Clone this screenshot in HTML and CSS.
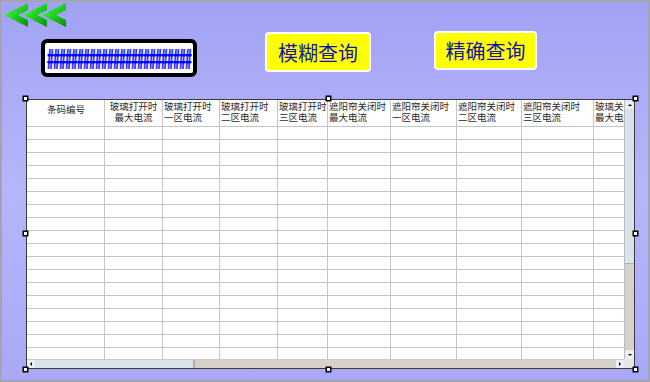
FILE: index.html
```html
<!DOCTYPE html>
<html lang="zh">
<head>
    <meta charset="UTF-8">
    <title>查询</title>
    <link rel="stylesheet" href="styles.css">
</head>
<body>
    <div id="screen">
        <div id="header">
            <svg class="back" width="70" height="26" viewBox="0 0 70 26">
                <defs>
                    <linearGradient id="g" x1="0" y1="0" x2="1" y2="1">
                        <stop offset="0" stop-color="#5cff5c"/>
                        <stop offset="0.5" stop-color="#1fd21f"/>
                        <stop offset="1" stop-color="#0a8a0a"/>
                    </linearGradient>
                </defs>
                <polygon fill="url(#g)" points="1,12 25,0 25,7 15,12 25,17 25,24"/>
                <polygon fill="url(#g)" points="20,12 44,0 44,7 34,12 44,17 44,24"/>
                <polygon fill="url(#g)" points="39,12 63,0 63,7 53,12 63,17 63,24"/>
            </svg>
            <div id="controls">
                <div id="barcode"><span>########################</span></div>
                <div class="query-btn" id="fuzzy">模糊查询</div>
                <div class="query-btn" id="exact">精确查询</div>
            </div>
        </div>

        <div id="grid-box">
            <div id="viewport">
                <div class="row head">
                    <div class="cell single">条码编号</div>
                    <div class="cell center">玻璃打开时<br>最大电流</div>
                    <div class="cell">玻璃打开时<br>一区电流</div>
                    <div class="cell">玻璃打开时<br>二区电流</div>
                    <div class="cell">玻璃打开时<br>三区电流</div>
                    <div class="cell">遮阳帘关闭时<br>最大电流</div>
                    <div class="cell">遮阳帘关闭时<br>一区电流</div>
                    <div class="cell">遮阳帘关闭时<br>二区电流</div>
                    <div class="cell">遮阳帘关闭时<br>三区电流</div>
                    <div class="cell">玻璃关闭时<br>最大电流</div>
                </div>
                <div id="rows"></div>
            </div>
            <div id="vscroll">
                <div class="sb-btn"><i class="tri up"></i></div>
                <div class="v-thumb"></div>
                <div class="track"></div>
                <div class="sb-btn"><i class="tri down"></i></div>
            </div>
            <div id="hscroll">
                <div class="sb-btn left-btn"><i class="tri left"></i></div>
                <div class="h-thumb"></div>
                <div class="track"></div>
                <div class="sb-btn right-btn"><i class="tri right"></i></div>
            </div>
            <div id="corner"></div>

            <span class="handle tl"></span>
            <span class="handle tm"></span>
            <span class="handle tr"></span>
            <span class="handle ml"></span>
            <span class="handle mr"></span>
            <span class="handle bl"></span>
            <span class="handle bm"></span>
            <span class="handle br"></span>
        </div>
    </div>

    <script>
        let rows = document.getElementById('rows');
        for (let i = 0; i < 19; i++) {
            let row = document.createElement('div');
            row.className = 'row';
            for (let j = 0; j < 10; j++) {
                let cell = document.createElement('div');
                cell.className = 'cell';
                row.appendChild(cell);
            }
            rows.appendChild(row);
        }
    </script>
</body>
</html>
```

FILE: styles.css
```css
body {
    margin: 0;
    font-family: "Noto Sans CJK SC", sans-serif;
}

#screen {
    width: 650px;
    height: 382px;
    box-sizing: border-box;
    overflow: hidden;
    background: linear-gradient(180deg, #a2a2f4 0%, #b6b6fc 50%, #a8a8f8 100%);
    box-shadow: inset 0 0 0 2px #a4a4b0;
}

#header {
    height: 96px;
}

.back {
    display: block;
    margin: 3px 0 0 3px;
}

#controls {
    display: flex;
    align-items: flex-start;
}

#barcode {
    width: 156px;
    height: 38px;
    margin: 10px 0 0 41px;
    box-sizing: border-box;
    border: 4px solid #000;
    border-radius: 6px;
    background-color: #fff;
    display: flex;
    align-items: center;
    justify-content: center;
    overflow: hidden;
}

#barcode span {
    font-family: "Liberation Sans", sans-serif;
    font-size: 10.8px;
    font-weight: bold;
    color: #0000ff;
    line-height: 10px;
    text-shadow: 0.8px 0 0 #0000ff;
    transform: scaleY(2.8);
}

.query-btn {
    box-sizing: border-box;
    border: 2px solid #fff;
    border-radius: 4px;
    background-color: #ffff00;
    color: #1414a8;
    font-size: 20px;
    display: flex;
    align-items: center;
    justify-content: center;
}

#fuzzy {
    width: 106px;
    height: 40px;
    margin: 3px 0 0 68px;
}

#exact {
    width: 103px;
    height: 39px;
    margin: 2px 0 0 63px;
}

#grid-box {
    position: relative;
    width: 609px;
    height: 270px;
    margin-left: 26px;
    box-sizing: border-box;
    border: 1px solid #3a3a3a;
    background-color: #fff;
    display: grid;
    grid-template-columns: 597px 10px;
    grid-template-rows: 259px 9px;
}

#viewport {
    overflow: hidden;
}

.row {
    display: grid;
    grid-template-columns: 78px 58px 57px 58px 50px 63px 66px 65px 72px 80px;
    height: 13px;
}

.row.head {
    height: 27px;
}

.cell {
    border-right: 1px solid #c4c4c4;
    border-bottom: 1px solid #c4c4c4;
    font-size: 9.5px;
    line-height: 11px;
    color: #2a2a2a;
    white-space: nowrap;
    overflow: hidden;
    padding: 1px 0 0 1px;
}

.cell.center {
    text-align: center;
    padding-left: 0;
}

.cell.single {
    text-align: center;
    padding-top: 4px;
}

#vscroll {
    display: flex;
    flex-direction: column;
    border-left: 1px solid #b8bcc4;
}

#hscroll {
    display: flex;
    border-top: 1px solid #c8c8c8;
}

.sb-btn {
    flex: none;
    background-color: #eceef2;
    display: flex;
    align-items: center;
    justify-content: center;
}

#vscroll .sb-btn {
    height: 9px;
}

.left-btn {
    width: 8px;
}

.right-btn {
    width: 8px;
}

.v-thumb {
    height: 154px;
    background-color: #dae2ea;
    border-bottom: 1px solid #b0b0b0;
}

.h-thumb {
    width: 158px;
    background-color: #dae2ea;
    border-right: 2px solid #b0b0b0;
}

.track {
    flex: 1;
    background-color: #d6d2ca;
}

.tri {
    width: 0;
    height: 0;
    border: 2px solid transparent;
}

.tri.up {
    border-bottom-color: #000;
    border-top-width: 0;
}

.tri.down {
    border-top-color: #000;
    border-bottom-width: 0;
}

.tri.left {
    border-right-color: #000;
    border-left-width: 0;
}

.tri.right {
    border-left-color: #000;
    border-right-width: 0;
}

#corner {
    background-color: #e6e6ea;
}

.handle {
    position: absolute;
    width: 3px;
    height: 3px;
    border: 1px solid #000;
    background-color: #fff;
    box-shadow: 0 0 0 0.5px #000;
}

.tl { left: -4px; top: -4px; }
.tm { left: 299px; top: -4px; }
.tr { right: -4px; top: -4px; }
.ml { left: -4px; top: 131px; }
.mr { right: -4px; top: 131px; }
.bl { left: -4px; bottom: -4px; }
.bm { left: 299px; bottom: -4px; }
.br { right: -4px; bottom: -4px; }
```
